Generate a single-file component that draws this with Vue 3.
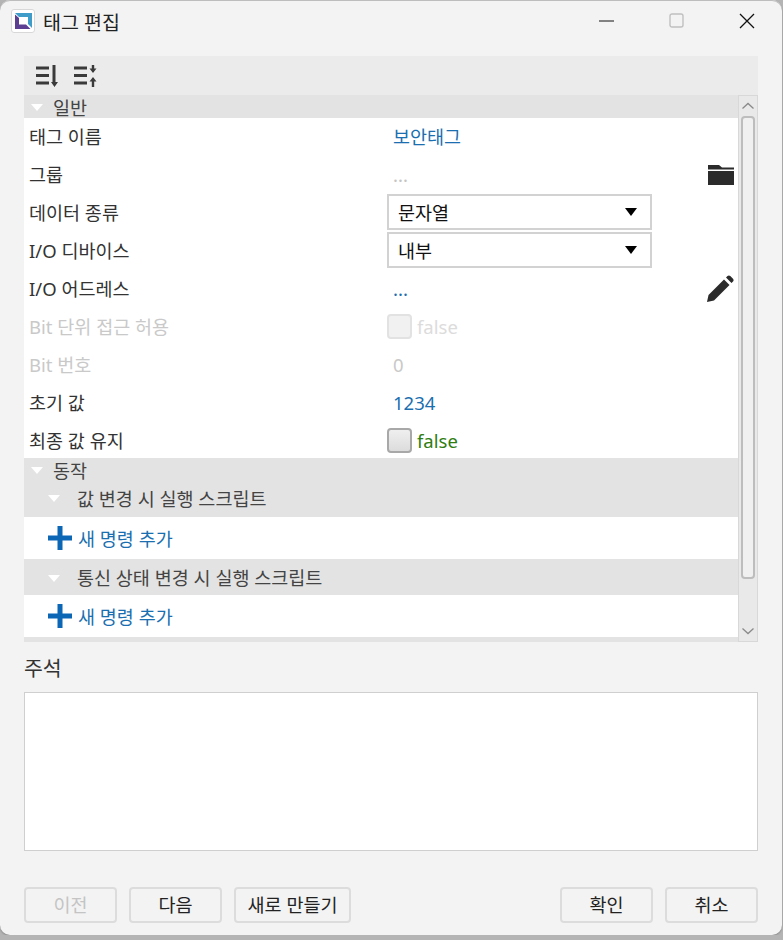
<template>
  <div class="window">
    <div class="titlebar">
      <div class="app-icon">
        <svg width="17" height="16" viewBox="0 0 17 16">
          <path d="M0 0h17v15l-4-4V4H4z" fill="#3f9cc8" />
          <path d="M0 1.500l4 3.500v6.500h7l4.500 4.500H0z" fill="#5d3f92" />
        </svg>
      </div>
      <span class="title">태그 편집</span>
      <div class="win-btns">
        <svg width="16" height="16" viewBox="0 0 16 16"><path d="M0 8h15" stroke="#111" stroke-width="1" /></svg>
        <svg width="16" height="16" viewBox="0 0 16 16"><rect x="1" y="1" width="13" height="13" rx="2" fill="none" stroke="#c0c0c0" stroke-width="1.400" /></svg>
        <svg width="16" height="16" viewBox="0 0 16 16"><path d="M1 1l14 14M15 1L1 15" stroke="#111" stroke-width="1.300" /></svg>
      </div>
    </div>

    <div class="content">
      <div class="toolbar">
        <svg width="24" height="24" viewBox="0 0 24 24">
          <path d="M1 2.500h13v3H1zM1 10h13v3H1zM1 17.500h13v3H1z" fill="#3a3a3a" />
          <path d="M17.500 1h3v17H23l-3.500 5-3.500-5h1.500z" fill="#3a3a3a" />
        </svg>
        <svg width="24" height="24" viewBox="0 0 24 24">
          <path d="M1 2.500h13v3H1zM1 10h13v3H1zM1 17.500h13v3H1z" fill="#3a3a3a" />
          <path d="M18.800 1h2.400v3.500h2.300L20 9l-3.500-4.500h2.300zM20 13l3.500 4.500h-2.300V23h-2.400v-5.500h-2.300z" fill="#3a3a3a" />
        </svg>
      </div>

      <div class="panel">
        <div class="list">
          <div class="section"><i class="tri"></i><span>일반</span></div>
          <div v-for="row in rows" :key="row.label" class="row" :class="{ off: row.off }">
            <div class="label">{{ row.label }}</div>
            <div class="value">
              <div v-if="row.select" class="select">
                <span>{{ row.select }}</span>
                <i class="caret"></i>
              </div>
              <div v-else-if="row.check" class="check-wrap">
                <i class="check"></i>
                <span class="false-text">false</span>
              </div>
              <span v-else class="val-text" :class="{ muted: row.muted }">{{ row.value }}</span>
            </div>
            <svg v-if="row.icon === 'folder'" class="row-icon" width="26" height="20" viewBox="0 0 26 20">
              <path d="M0 0h11l3 2.500h12v2H0zM0 6h26v14H0z" fill="#2b2b2b" />
            </svg>
            <svg v-if="row.icon === 'pencil'" class="row-icon" width="28" height="28" viewBox="0 0 28 28">
              <path d="M1 27l1.500-7L18 4.500l5.500 5.500L8 25.500z" fill="#2b2b2b" />
              <path d="M20 2.500l1.500-1.500c.8-.8 2-.8 2.800 0l2.700 2.700c.8.8.8 2 0 2.800L25.500 8z" fill="#2b2b2b" />
            </svg>
          </div>

          <div class="section first-action"><i class="tri"></i><span>동작</span></div>
          <div class="section sub short"><i class="tri"></i><span>값 변경 시 실행 스크립트</span></div>
          <div class="add-row">
            <svg width="24" height="24" viewBox="0 0 24 24"><path d="M9.500 0h5v9.500H24v5h-9.500V24h-5v-9.500H0v-5h9.500z" fill="#0b66b5" /></svg>
            <span>새 명령 추가</span>
          </div>
          <div class="section sub"><i class="tri"></i><span>통신 상태 변경 시 실행 스크립트</span></div>
          <div class="add-row">
            <svg width="24" height="24" viewBox="0 0 24 24"><path d="M9.500 0h5v9.500H24v5h-9.500V24h-5v-9.500H0v-5h9.500z" fill="#0b66b5" /></svg>
            <span>새 명령 추가</span>
          </div>
          <div class="section"><i class="tri"></i><span>로그</span></div>
        </div>

        <div class="scrollbar">
          <svg width="20" height="20" viewBox="0 0 20 20"><path d="M4.500 12.500L10 7.500l5.500 5" fill="none" stroke="#8a8a8a" stroke-width="1.300" /></svg>
          <div class="thumb"></div>
          <svg class="arrow-down" width="20" height="20" viewBox="0 0 20 20"><path d="M4.500 7.500L10 12.500l5.500-5" fill="none" stroke="#8a8a8a" stroke-width="1.300" /></svg>
        </div>
      </div>

      <div class="note-label">주석</div>
      <div class="note"></div>

      <div class="buttons">
        <button class="btn" disabled>이전</button>
        <button class="btn">다음</button>
        <button class="btn wide">새로 만들기</button>
        <div class="spacer"></div>
        <button class="btn">확인</button>
        <button class="btn">취소</button>
      </div>
    </div>
  </div>
</template>

<script setup>
const rows = [
  { label: '태그 이름', value: '보안태그' },
  { label: '그룹', value: '...', muted: true, icon: 'folder' },
  { label: '데이터 종류', select: '문자열' },
  { label: 'I/O 디바이스', select: '내부' },
  { label: 'I/O 어드레스', value: '...', icon: 'pencil' },
  { label: 'Bit 단위 접근 허용', check: true, off: true },
  { label: 'Bit 번호', value: '0', off: true },
  { label: '초기 값', value: '1234' },
  { label: '최종 값 유지', check: true }
]
</script>

<style>
html, body {
  margin: 0;
  background: #b4b4b4;
}
</style>

<style scoped>
.window {
  width: 782px;
  height: 935px;
  background: #f3f3f3;
  border-radius: 10px;
  box-shadow: inset 0 1px 0 #bdbdbd, 0 1px 2px rgba(0, 0, 0, 0.25);
  font-family: "Noto Sans", "Noto Sans CJK KR", sans-serif;
  font-size: 18.5px;
  color: #333;
  overflow: hidden;
}

.titlebar {
  height: 56px;
  display: flex;
  align-items: center;
  padding: 0 27px 14px 11px;
  box-sizing: border-box;
}

.app-icon {
  width: 24px;
  height: 24px;
  box-sizing: border-box;
  background: #fff;
  border: 1px solid #d8d8d8;
  border-radius: 3px;
  display: flex;
  align-items: center;
  justify-content: center;
}

.title {
  margin-left: 8px;
  font-size: 19.5px;
  color: #222;
}

.win-btns {
  margin-left: auto;
  display: flex;
  gap: 54px;
}

.content {
  padding: 0 24px;
}

.toolbar {
  height: 39px;
  background: #ebebeb;
  display: flex;
  align-items: center;
  gap: 14px;
  padding-left: 11px;
}

.panel {
  height: 547px;
  display: flex;
  overflow: hidden;
}

.list {
  flex: 1;
  background: #fff;
  overflow: hidden;
}

.section {
  height: 23px;
  background: #e3e3e3;
  display: flex;
  align-items: center;
  color: #444;
}

.tri {
  display: block;
  width: 0;
  height: 0;
  margin: 2px 10px 0 7px;
  border-left: 6px solid transparent;
  border-right: 6px solid transparent;
  border-top: 7px solid #fff;
}

.section.sub {
  height: 36px;
  padding-left: 17px;
}

.section.sub .tri {
  margin-right: 17px;
}

.section.sub.short {
  padding-bottom: 3px;
  box-sizing: border-box;
}

.first-action {
  margin-top: -2px;
  position: relative;
}

.row {
  height: 38px;
  padding-bottom: 2px;
  box-sizing: border-box;
  display: flex;
  align-items: center;
  position: relative;
}

.label {
  width: 363px;
  padding-left: 5px;
  box-sizing: border-box;
  color: #333;
}

.value {
  flex: 1;
}

.val-text {
  margin-left: 6px;
  color: #1b6fb0;
}

.val-text.muted {
  color: #c4c4c4;
}

.select {
  width: 265px;
  height: 36px;
  box-sizing: border-box;
  border: 2px solid #d2d2d2;
  display: flex;
  align-items: center;
  justify-content: space-between;
  padding: 0 13px 0 9px;
  color: #111;
}

.caret {
  width: 0;
  height: 0;
  border-left: 6px solid transparent;
  border-right: 6px solid transparent;
  border-top: 8px solid #000;
}

.check-wrap {
  display: flex;
  align-items: center;
  gap: 5px;
}

.check {
  display: block;
  width: 25px;
  height: 25px;
  box-sizing: border-box;
  border: 2px solid #a8a8a8;
  border-radius: 4px;
  background: linear-gradient(#efefef, #dcdcdc);
}

.false-text {
  color: #2e7d12;
}

.row-icon {
  position: absolute;
  right: 4px;
  top: 50%;
  transform: translateY(-50%);
}

.off .label,
.off .val-text {
  color: #c9c9c9;
}

.off .false-text {
  color: #dcdcdc;
}

.off .check {
  border-color: #e2e2e2;
  background: #f1f1f1;
}

.add-row {
  height: 42px;
  display: flex;
  align-items: center;
  gap: 6px;
  padding-left: 24px;
  color: #1b6fb0;
}

.scrollbar {
  width: 20px;
  background: #e9e9e9;
  box-sizing: border-box;
  border: 1px solid #d8d8d8;
  display: flex;
  flex-direction: column;
  align-items: center;
}

.scrollbar svg {
  flex: none;
}

.thumb {
  width: 14px;
  height: 463px;
  box-sizing: border-box;
  border: 2px solid #bdbdbd;
  border-radius: 4px;
  background: #f0f0f0;
}

.arrow-down {
  margin-top: auto;
}

.note-label {
  margin-top: 10px;
  height: 40px;
  font-size: 20.5px;
  color: #333;
}

.note {
  height: 159px;
  background: #fff;
  border: 1px solid #cfcfcf;
  box-sizing: border-box;
}

.buttons {
  margin-top: 36px;
  display: flex;
  gap: 12px;
}

.spacer {
  flex: 1;
}

.btn {
  width: 93px;
  height: 36px;
  padding: 0 0 2px;
  box-sizing: border-box;
  background: #f3f3f3;
  border: 2px solid #dcdcdc;
  border-radius: 4px;
  font: inherit;
  color: #222;
}

.btn.wide {
  width: 117px;
}

.btn:disabled {
  color: #c4c4c4;
}
</style>
